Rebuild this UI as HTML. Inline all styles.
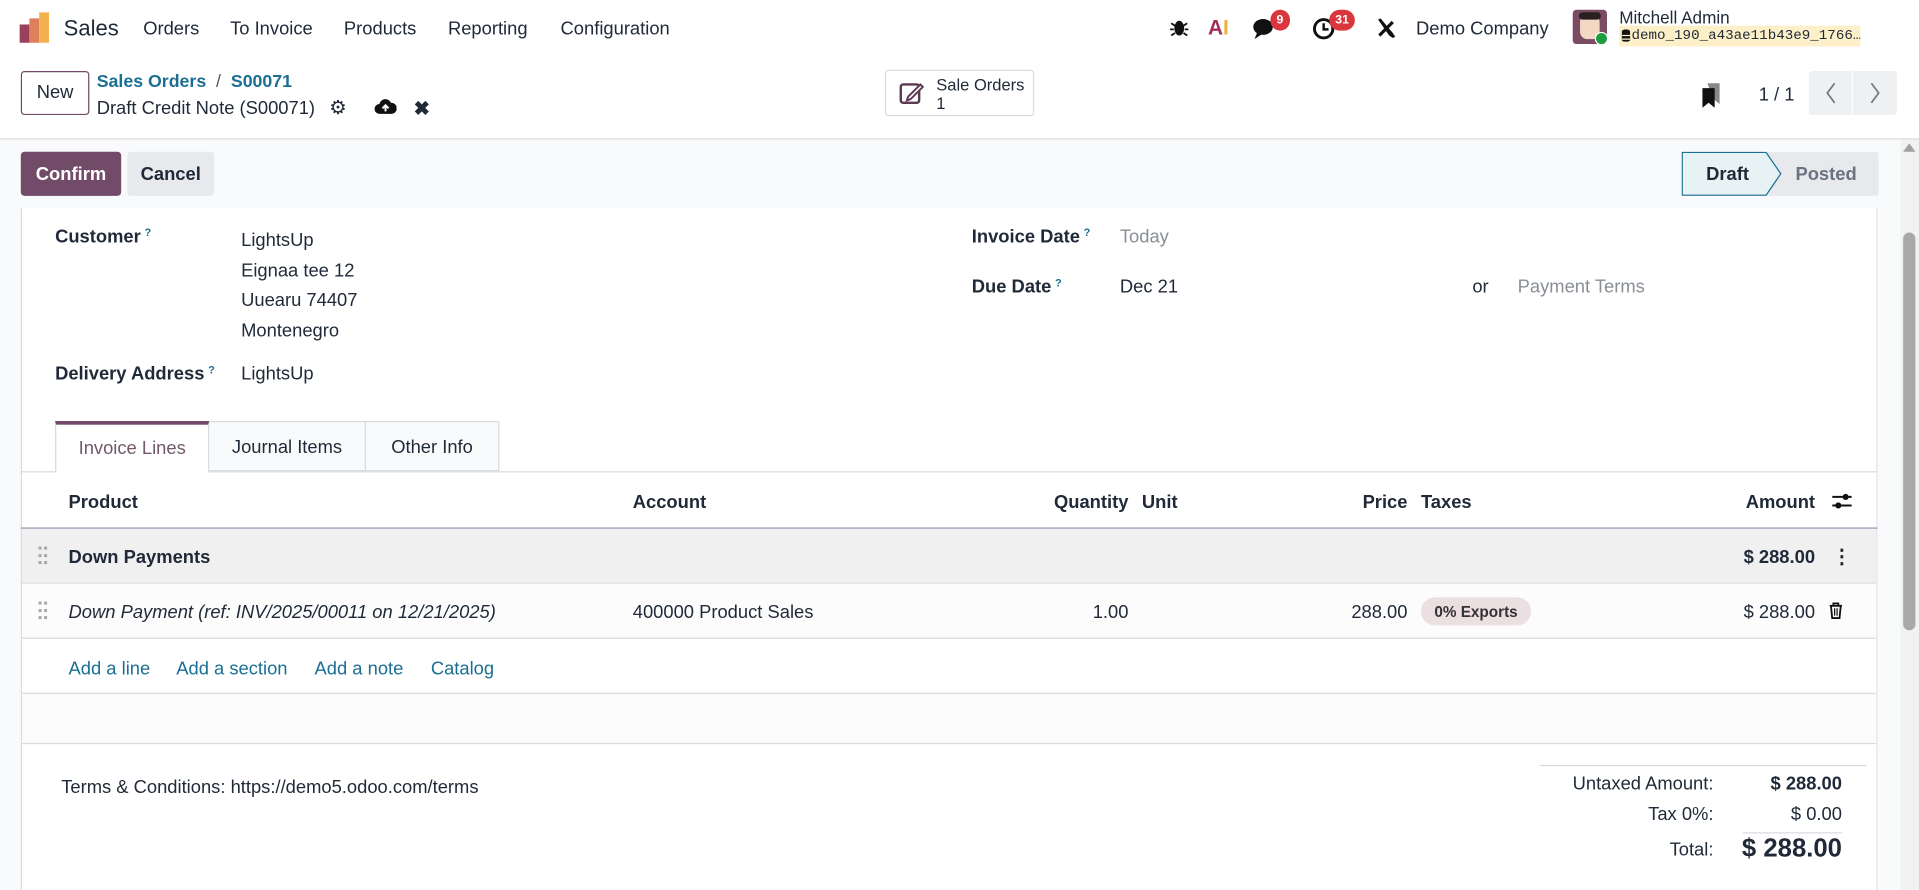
<!DOCTYPE html>
<html><head><meta charset="utf-8">
<style>
*{box-sizing:border-box;margin:0;padding:0}
html,body{width:1919px;height:889px;overflow:hidden;background:#fff;font-family:"Liberation Sans",sans-serif;color:#1f2937}
#w{position:absolute;left:0;top:0;width:1568px;height:727px;transform:scale(1.2239);transform-origin:0 0;font-size:15px}
.a{position:absolute;white-space:nowrap}
.b{font-weight:bold}
.lk{color:#1b6f93}
.mut{color:#8a8f96}
.q{font-size:9px;color:#1b6f93;vertical-align:top;margin-left:3px}
.badge{position:absolute;background:#d9363e;color:#fff;font-size:10px;font-weight:bold;border-radius:9px;height:17px;line-height:17px;text-align:center;padding:0 5px}
.r{text-align:right}
</style></head><body><div id="w">
<svg class="a" style="left:16px;top:10px" width="25" height="25" viewBox="0 0 25 25"><rect x="0" y="10" width="8" height="15" fill="#9b3f5e"/><rect x="8" y="5" width="8" height="20" fill="#e0805a"/><rect x="16" y="0" width="8" height="25" fill="#f3b04e"/></svg>
<div class="a" style="left:52px;top:13px;font-size:18px">Sales</div>
<div class="a" style="left:117px;top:15px">Orders</div>
<div class="a" style="left:188px;top:15px">To Invoice</div>
<div class="a" style="left:281px;top:15px">Products</div>
<div class="a" style="left:366px;top:15px">Reporting</div>
<div class="a" style="left:458px;top:15px">Configuration</div>
<svg class="a" style="left:956px;top:14px" width="15" height="16" viewBox="0 0 15 16"><ellipse cx="7.5" cy="9" rx="4" ry="6" fill="#111"/><path d="M1 5l3 2M14 5l-3 2M0 10h3M15 10h-3M1 15l3-2M14 15l-3-2" stroke="#111" stroke-width="1.5"/></svg>
<div class="a b" style="left:987px;top:13px;font-size:17px;color:#a0305a">A<span style="color:#f0b040">I</span></div>
<svg class="a" style="left:1023px;top:14px" width="22" height="20" viewBox="0 0 22 20"><ellipse cx="9" cy="8" rx="8" ry="6.5" fill="#111"/><path d="M4 13l-2 5 6-4z" fill="#111"/></svg>
<div class="badge" style="left:1038px;top:8px">9</div>
<svg class="a" style="left:1072px;top:14px" width="19" height="19" viewBox="0 0 19 19"><circle cx="9.5" cy="9.5" r="7.5" fill="none" stroke="#111" stroke-width="2.4"/><path d="M9.5 5v5h4" stroke="#111" stroke-width="2" fill="none"/></svg>
<div class="badge" style="left:1086px;top:8px">31</div>
<svg class="a" style="left:1124px;top:14px" width="18" height="18" viewBox="0 0 18 18"><path d="M3 15L14 4" stroke="#111" stroke-width="2.6"/><path d="M2 2l2-1 10 12 2 3-2 1-3-2z" fill="#111"/></svg>
<div class="a" style="left:1157px;top:15px">Demo Company</div>
<div class="a" style="left:1285px;top:8px;width:28px;height:28px;background:#7a4b62;border-radius:3px"><div style="position:absolute;left:6px;top:4px;width:16px;height:20px;background:#f3d9c4;border-radius:6px"></div><div style="position:absolute;left:5px;top:2px;width:18px;height:6px;background:#2a1f1f;border-radius:4px"></div></div>
<div class="a" style="left:1303px;top:26px;width:11px;height:11px;border-radius:50%;background:#1f9c3e;border:1px solid #fff"></div>
<div class="a" style="left:1323px;top:6px;font-size:14px">Mitchell Admin</div>
<div class="a" style="left:1323px;top:21px;width:197px;height:17px;background:#fdf0c9;font-family:'Liberation Mono',monospace;font-size:11.6px;line-height:17px;padding-left:10px;overflow:hidden">demo_190_a43ae11b43e9_1766…</div>
<svg class="a" style="left:1325px;top:24px" width="7" height="11" viewBox="0 0 7 11"><ellipse cx="3.5" cy="2" rx="3.5" ry="2" fill="#111"/><rect x="0" y="2" width="7" height="8" rx="2" fill="#111"/><path d="M0 5h7M0 8h7" stroke="#fdf0c9"/></svg>
<div class="a" style="left:0;top:113px;width:1568px;height:1px;background:#d8dadd"></div>
<div class="a" style="left:17px;top:58px;width:56px;height:36px;border:1px solid #714b67;border-radius:3px;text-align:center;line-height:34px">New</div>
<div class="a lk b" style="left:79px;top:59px;font-size:14.5px">Sales Orders <span style="color:#555;font-weight:normal">&nbsp;/&nbsp;</span> S00071</div>
<div class="a" style="left:79px;top:80px">Draft Credit Note (S00071)</div>
<div class="a" style="left:269px;top:78px;font-size:16px">&#9881;</div>
<svg class="a" style="left:306px;top:80px" width="18" height="14" viewBox="0 0 18 14"><path d="M4 13a4 4 0 010-8 5 5 0 019.5-1A4 4 0 0114 13z" fill="#111"/><path d="M9 11V6M6.5 8.5L9 6l2.5 2.5" stroke="#fff" stroke-width="1.6" fill="none"/></svg>
<div class="a b" style="left:338px;top:79px;font-size:16px">&#10006;</div>
<div class="a" style="left:723px;top:57px;width:122px;height:38px;border:1px solid #d8dadd;border-radius:3px"></div>
<svg class="a" style="left:734px;top:65px" width="22" height="22" viewBox="0 0 22 22"><rect x="2" y="4" width="15" height="15" rx="2" fill="none" stroke="#5a3a52" stroke-width="2"/><path d="M8 14l10-10 2 2-10 10-3 1z" fill="#fff" stroke="#5a3a52" stroke-width="1.6"/></svg>
<div class="a" style="left:765px;top:62px;font-size:13.5px;line-height:15px">Sale Orders<br>1</div>
<svg class="a" style="left:1390px;top:67px" width="18" height="22" viewBox="0 0 18 22"><path d="M5 1h10v17l-5-4" fill="#888"/><path d="M1 5h10v16l-5-4-5 4z" fill="#111"/></svg>
<div class="a" style="left:1437px;top:69px">1 / 1</div>
<div class="a" style="left:1478px;top:58px;width:72px;height:36px;background:#eef0f2;border-radius:3px"></div>
<div class="a" style="left:1513px;top:58px;width:1px;height:36px;background:#fff"></div>
<svg class="a" style="left:1491px;top:67px" width="10" height="18" viewBox="0 0 10 18"><path d="M8 1L2 9l6 8" fill="none" stroke="#777" stroke-width="1.4"/></svg>
<svg class="a" style="left:1527px;top:67px" width="10" height="18" viewBox="0 0 10 18"><path d="M2 1l6 8-6 8" fill="none" stroke="#777" stroke-width="1.4"/></svg>
<div class="a" style="left:0;top:114px;width:1568px;height:613px;background:#f9fafb"></div>
<div class="a b" style="left:17px;top:124px;width:82px;height:36px;background:#714b67;color:#fff;border-radius:3px;text-align:center;line-height:37px">Confirm</div>
<div class="a b" style="left:104px;top:124px;width:71px;height:36px;background:#e7e9ed;border-radius:3px;text-align:center;line-height:37px">Cancel</div>
<svg class="a" style="left:1374px;top:124px" width="161" height="36" viewBox="0 0 161 36"><rect x="68" y="0" width="93" height="36" fill="#e7e9ed" rx="2"/><path d="M0.5 0.5H69L81 18 69 35.5H0.5z" fill="#e6f2f4" stroke="#1b6f93"/></svg>
<div class="a b" style="left:1394px;top:134px">Draft</div>
<div class="a b" style="left:1467px;top:134px;color:#6b7280">Posted</div>
<div class="a" style="left:1553px;top:114px;width:15px;height:613px;background:#f1f1f1"></div>
<div class="a" style="left:1555px;top:117px;width:0;height:0;border-left:5px solid transparent;border-right:5px solid transparent;border-bottom:7px solid #a0a0a0"></div>
<div class="a" style="left:1555px;top:190px;width:10px;height:325px;background:#a8a8a8;border-radius:5px"></div>
<div class="a" style="left:17px;top:170px;width:1517px;height:557px;background:#fff;border-left:1px solid #dcdcdc;border-right:1px solid #e4e4e4"></div>
<div class="a b" style="left:45px;top:185px">Customer<span class="q">?</span></div>
<div class="a" style="left:197px;top:185px;line-height:24.5px">LightsUp<br>Eignaa tee 12<br>Uuearu 74407<br>Montenegro</div>
<div class="a b" style="left:45px;top:297px">Delivery Address<span class="q">?</span></div>
<div class="a" style="left:197px;top:297px">LightsUp</div>
<div class="a b" style="left:794px;top:185px">Invoice Date<span class="q">?</span></div>
<div class="a mut" style="left:915px;top:185px">Today</div>
<div class="a b" style="left:794px;top:226px">Due Date<span class="q">?</span></div>
<div class="a" style="left:915px;top:226px">Dec 21</div>
<div class="a" style="left:1203px;top:226px">or</div>
<div class="a mut" style="left:1240px;top:226px">Payment Terms</div>
<div class="a" style="left:17px;top:385px;width:1517px;height:1px;background:#d8dadd"></div>
<div class="a" style="left:45px;top:344px;width:126px;height:42px;background:#fff;border:1px solid #d8dadd;border-top:3px solid #714b67;border-bottom:none;text-align:center;line-height:40px;color:#71596a">Invoice Lines</div>
<div class="a" style="left:171px;top:344px;width:128px;height:41px;background:#f9fafb;border:1px solid #d8dadd;border-left:none;text-align:center;line-height:42px">Journal Items</div>
<div class="a" style="left:299px;top:344px;width:109px;height:41px;background:#f9fafb;border:1px solid #d8dadd;border-left:none;text-align:center;line-height:42px">Other Info</div>
<div class="a b" style="left:56px;top:402px">Product</div>
<div class="a b" style="left:517px;top:402px">Account</div>
<div class="a b r" style="left:822px;top:402px;width:100px">Quantity</div>
<div class="a b" style="left:933px;top:402px">Unit</div>
<div class="a b r" style="left:1050px;top:402px;width:100px">Price</div>
<div class="a b" style="left:1161px;top:402px">Taxes</div>
<div class="a b r" style="left:1383px;top:402px;width:100px">Amount</div>
<svg class="a" style="left:1497px;top:402px" width="16" height="15" viewBox="0 0 16 15"><path d="M0 4h16M0 11h16" stroke="#111" stroke-width="1.6"/><circle cx="11" cy="4" r="2.5" fill="#111"/><circle cx="5" cy="11" r="2.5" fill="#111"/></svg>
<div class="a" style="left:17px;top:431px;width:1517px;height:1px;background:#8d8fa8"></div>
<div class="a" style="left:18px;top:432px;width:1515px;height:45px;background:#f0f0f0;border-bottom:1px solid #dcdcdc"></div>
<div class="a" style="left:31px;top:446px;font-size:10px;color:#aaa;line-height:6px;letter-spacing:1px">▪▪<br>▪▪<br>▪▪</div>
<div class="a b" style="left:56px;top:447px">Down Payments</div>
<div class="a b r" style="left:1383px;top:447px;width:100px">$ 288.00</div>
<div class="a b" style="left:1497px;top:445px;font-size:16px">&#8942;</div>
<div class="a" style="left:18px;top:477px;width:1515px;height:45px;background:#fcfcfc;border-bottom:1px solid #dcdcdc"></div>
<div class="a" style="left:31px;top:491px;font-size:10px;color:#aaa;line-height:6px;letter-spacing:1px">▪▪<br>▪▪<br>▪▪</div>
<div class="a" style="left:56px;top:492px;font-style:italic">Down Payment (ref: INV/2025/00011 on 12/21/2025)</div>
<div class="a" style="left:517px;top:492px">400000 Product Sales</div>
<div class="a r" style="left:822px;top:492px;width:100px">1.00</div>
<div class="a r" style="left:1050px;top:492px;width:100px">288.00</div>
<div class="a b" style="left:1161px;top:488px;width:90px;height:23px;background:#ebdfe1;border-radius:12px;text-align:center;line-height:24px;font-size:12.5px;color:#333">0% Exports</div>
<div class="a r" style="left:1383px;top:492px;width:100px">$ 288.00</div>
<svg class="a" style="left:1494px;top:492px" width="12" height="14" viewBox="0 0 12 14"><path d="M1 3h10M4 3V1h4v2M2 3l1 10h6l1-10" fill="none" stroke="#111" stroke-width="1.5"/><path d="M5 5v6M7 5v6" stroke="#111"/></svg>
<div class="a lk" style="left:56px;top:538px">Add a line</div>
<div class="a lk" style="left:144px;top:538px">Add a section</div>
<div class="a lk" style="left:257px;top:538px">Add a note</div>
<div class="a lk" style="left:352px;top:538px">Catalog</div>
<div class="a" style="left:18px;top:566px;width:1515px;height:42px;background:#fbfbfb;border-top:1px solid #dcdcdc;border-bottom:1px solid #dcdcdc"></div>
<div class="a" style="left:50px;top:635px">Terms &amp; Conditions: https://demo5.odoo.com/terms</div>
<div class="a" style="left:1258px;top:625px;width:267px;height:1px;background:#d8dadd"></div>
<div class="a r" style="left:1200px;top:632px;width:200px">Untaxed Amount:</div>
<div class="a b r" style="left:1405px;top:632px;width:100px">$ 288.00</div>
<div class="a r" style="left:1200px;top:657px;width:200px">Tax 0%:</div>
<div class="a r" style="left:1405px;top:657px;width:100px">$ 0.00</div>
<div class="a" style="left:1424px;top:680px;width:81px;height:1px;background:#d8dadd"></div>
<div class="a r" style="left:1200px;top:686px;width:200px">Total:</div>
<div class="a b r" style="left:1355px;top:682px;width:150px;font-size:21px">$ 288.00</div>
</div></body></html>
